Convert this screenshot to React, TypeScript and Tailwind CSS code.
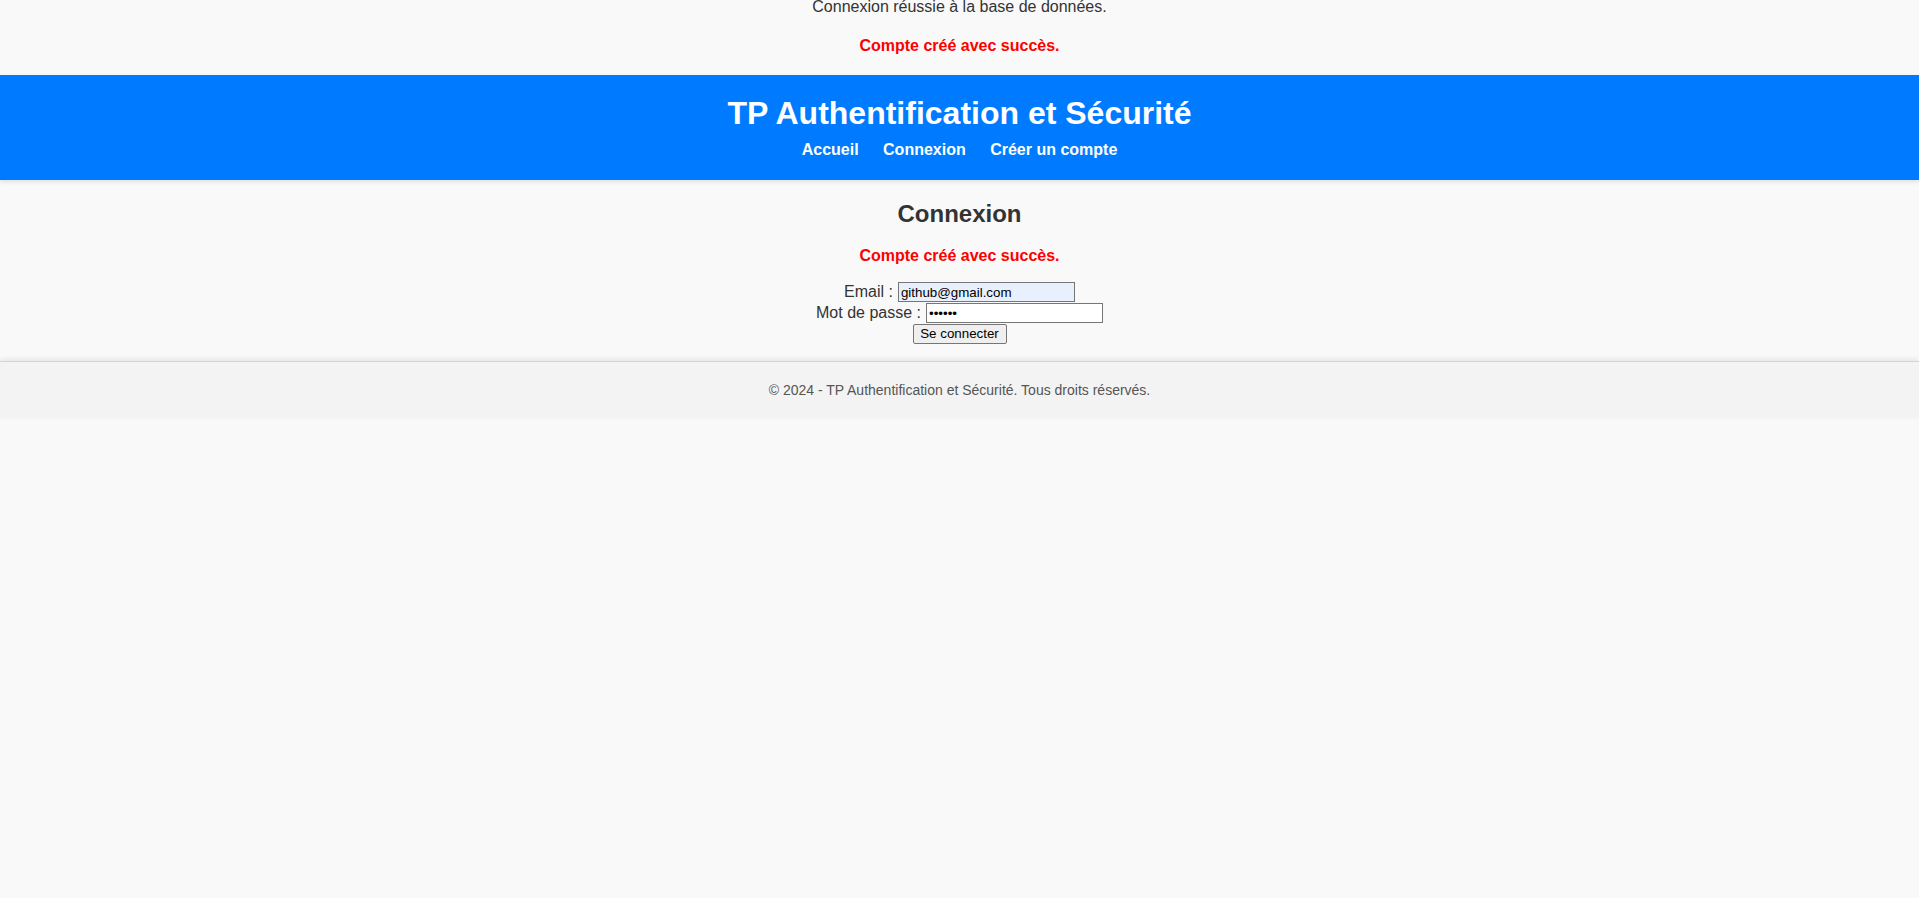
import React from "react";

export default function App() {
  return (
    <div className="min-h-[898px] bg-[#f9f9f9] text-[#333] font-['Liberation_Sans',Arial,sans-serif] text-[16px]">
      <div className="text-center leading-[14px] pt-0">Connexion réussie à la base de données.</div>
      <p className="text-center font-bold text-[#ff0000] leading-[18px] mt-[23px] h-[38px]">Compte créé avec succès.</p>
      <header className="bg-[#007bff] text-white text-center pt-[20px] pb-[20px] h-[105px] shadow-[0_2px_4px_rgba(0,0,0,0.1)] relative">
        <h1 className="text-[32px] font-bold leading-[37px] mb-[9px]">TP Authentification et Sécurité</h1>
        <nav className="leading-[18px] font-bold">
          <a className="mx-[10px] text-white">Accueil</a>{" "}
          <a className="mx-[10px] text-white">Connexion</a>{" "}
          <a className="mx-[10px] text-white">Créer un compte</a>
        </nav>
      </header>
      <main className="text-center pt-[20px] h-[181px]">
        <h2 className="text-[24px] font-bold leading-[28px]">Connexion</h2>
        <p className="font-bold text-[#ff0000] leading-[18px] mt-[19px]">Compte créé avec succès.</p>
        <form className="mt-[17px] flex flex-col items-center">
          <div className="h-[21px] flex items-start">
            <label className="leading-[18px] pt-[1px] mr-[5px]">Email :</label>
            <input
              type="email"
              defaultValue="github@gmail.com"
              className="w-[177px] h-[20px] border border-[#767676] bg-[#e8f0fe] text-black text-[13.33px] px-[2px] leading-[16px] outline-none font-['Liberation_Sans',Arial,sans-serif]"
            />
          </div>
          <div className="h-[21px] flex items-start">
            <label className="leading-[18px] pt-[1px] mr-[5px]">Mot de passe :</label>
            <input
              type="password"
              defaultValue="123456"
              className="w-[177px] h-[20px] border border-[#767676] bg-white text-black text-[13.33px] px-[2px] leading-[16px] outline-none font-['Liberation_Sans',Arial,sans-serif]"
            />
          </div>
          <div className="h-[21px] flex items-start">
            <button
              type="button"
              className="h-[20px] w-[94px] border border-[#767676] rounded-[2px] bg-[#efefef] text-black text-[13.33px] leading-[16px] px-[6px] font-['Liberation_Sans',Arial,sans-serif]"
            >
              Se connecter
            </button>
          </div>
        </form>
      </main>
      <footer className="bg-[#f3f3f3] border-t border-[#d4d4d4] shadow-[0_-2px_5px_rgba(0,0,0,0.08)] h-[57px] flex items-center justify-center text-[14px] text-[#555] relative">
        © 2024 - TP Authentification et Sécurité. Tous droits réservés.
      </footer>
    </div>
  );
}
